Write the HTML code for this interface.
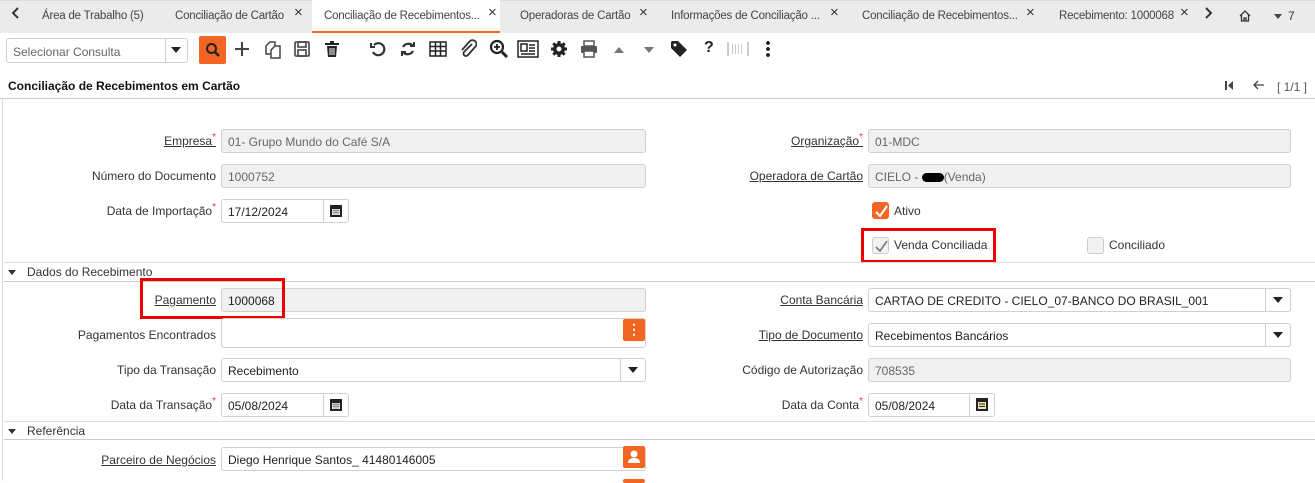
<!DOCTYPE html>
<html><head><meta charset="utf-8">
<style>
*{box-sizing:border-box;margin:0;padding:0}
body{width:1315px;height:481px;overflow:hidden;background:#fff;font-family:"Liberation Sans",sans-serif;font-size:12px;color:#333;position:relative}
.a{position:absolute;white-space:nowrap}
.tabs{left:0;top:0;width:1315px;height:33px;background:#ebebeb;border-top:1px solid #ddd}
.tab{top:8px;font-size:11.5px;line-height:16px;height:18px;letter-spacing:-0.2px;color:#444;overflow:hidden}
.x{font-size:15px;color:#333;top:4px}
.lbl{text-align:right;font-size:12px;color:#333}
.u{text-decoration:underline}
.req::after{content:"*";color:#e33;font-size:10px;position:relative;top:-5px}
.in{height:24px;border:1px solid #d0d0d0;border-radius:3px;background:#fff;padding:5px 6px;font-size:12px;color:#222}
.ro{background:#f0f0f0;color:#666}
.cal{width:25px;height:22px;border-left:1px solid #d0d0d0;right:0;top:0}
.dd{width:25px;height:22px;border-left:1px solid #d0d0d0;right:0;top:0;text-align:center}
.dd::after{content:"";position:absolute;left:7px;top:8px;border-left:5px solid transparent;border-right:5px solid transparent;border-top:6px solid #222}
.hr{height:1px;background:#ddd;left:4px;width:1311px}
.cb{width:17px;height:17px;border:1px solid #ccc;border-radius:3px;background:#f2f2f2}
.ob{background:#f26522;width:22px;height:22px;border-radius:2px}
.tri{border-left:4px solid transparent;border-right:4px solid transparent;border-top:5px solid #333}
</style></head><body>
<div class="a tabs"></div>
<svg class="a" style="left:10px;top:6px" width="10" height="14"><path d="M8 2L3 7l5 5" fill="none" stroke="#333" stroke-width="2"/></svg>
<div class="a tab" style="left:42px">Área de Trabalho (5)</div>
<div class="a tab" style="left:175px;width:116px">Conciliação de Cartão</div><div class="a x" style="left:294px">×</div>
<div class="a" style="left:312px;top:0;width:188px;height:33px;background:#fff;border-bottom:2px solid #f26522"></div>
<div class="a tab" style="left:324px;width:160px">Conciliação de Recebimentos...</div><div class="a x" style="left:488px">×</div>
<div class="a tab" style="left:520px;width:116px">Operadoras de Cartão</div><div class="a x" style="left:639px">×</div>
<div class="a tab" style="left:671px;width:156px">Informações de Conciliação ...</div><div class="a x" style="left:830px">×</div>
<div class="a tab" style="left:862px;width:162px">Conciliação de Recebimentos...</div><div class="a x" style="left:1026px">×</div>
<div class="a tab" style="left:1059px;width:118px">Recebimento: 1000068</div><div class="a x" style="left:1180px">×</div>
<svg class="a" style="left:1204px;top:6px" width="10" height="14"><path d="M2 2l5 5-5 5" fill="none" stroke="#333" stroke-width="2"/></svg>
<svg class="a" style="left:1239px;top:10px" width="12" height="12" fill="none" stroke="#333" stroke-width="1.3"><path d="M1 6L6 1l5 5M2.5 5v6h7V5M5 11V8h2v3"/></svg>
<div class="a tri" style="left:1274px;top:14px;border-top-color:#444"></div>
<div class="a" style="left:1288px;top:9px;font-size:12px;color:#333">7</div>

<!-- toolbar -->
<div class="a in" style="left:6px;top:38px;width:182px;height:25px;color:#666;padding:6px 6px">Selecionar Consulta</div>
<div class="a" style="left:165px;top:39px;width:1px;height:23px;background:#d0d0d0"></div>
<div class="a" style="left:171px;top:47px;border-left:5px solid transparent;border-right:5px solid transparent;border-top:6px solid #222"></div>
<div class="a" style="left:199px;top:36px;width:27px;height:28px;background:#f26522;border-radius:2px"></div>
<svg class="a" style="left:204px;top:41px" width="18" height="18"><circle cx="7.5" cy="7.5" r="4.5" fill="none" stroke="#222" stroke-width="2"/><path d="M11 11l4 4" stroke="#222" stroke-width="2.5"/></svg>
<svg class="a" style="left:234px;top:41px" width="16" height="16"><path d="M8 1v14M1 8h14" stroke="#444" stroke-width="2"/></svg>
<svg class="a" style="left:263px;top:40px" width="20" height="20" fill="none" stroke="#444" stroke-width="1.5"><path d="M3 14V6l4-4h5v12z"/><path d="M8 18V10l4-4h5v12z" fill="#fff"/></svg>
<svg class="a" style="left:293px;top:40px" width="18" height="18" fill="none" stroke="#444" stroke-width="1.6"><rect x="2" y="2" width="14" height="14" rx="1"/><rect x="5" y="2" width="8" height="5"/><rect x="5" y="10" width="8" height="6"/></svg>
<svg class="a" style="left:324px;top:40px" width="16" height="18"><rect x="1" y="3" width="14" height="2" fill="#222"/><rect x="6" y="1" width="4" height="2" fill="#222"/><path d="M3 6h10l-1 11H4z" fill="#222"/><path d="M6 8v7M8 8v7M10 8v7" stroke="#fff"/></svg>
<svg class="a" style="left:369px;top:40px" width="18" height="18" fill="none" stroke="#333" stroke-width="2.2"><path d="M5 5a6 6 0 1 1-1 7"/><path d="M2 3v4h4" stroke-width="2"/></svg>
<svg class="a" style="left:399px;top:40px" width="18" height="18" fill="none" stroke="#333" stroke-width="2.2"><path d="M14 6a6 6 0 0 0-10 1M4 12a6 6 0 0 0 10-1"/><path d="M15 2v4h-4M3 16v-4h4" stroke-width="2"/></svg>
<svg class="a" style="left:429px;top:41px" width="18" height="16" fill="none" stroke="#222" stroke-width="1.5"><rect x="1" y="1" width="16" height="14"/><path d="M1 5.5h16M1 10h16M6.5 1v14M11.5 1v14"/></svg>
<svg class="a" style="left:459px;top:39px" width="18" height="20" fill="none" stroke="#333" stroke-width="1.8"><path d="M13 5L5 13a2.5 2.5 0 0 0 4 3l8-9a4 4 0 0 0-6-5L3 11"/></svg>
<svg class="a" style="left:489px;top:39px" width="20" height="20"><circle cx="8" cy="8" r="6" fill="none" stroke="#222" stroke-width="2.2"/><path d="M13 13l5 5" stroke="#222" stroke-width="3"/><path d="M5 8h6M8 5v6" stroke="#222" stroke-width="1.8"/></svg>
<svg class="a" style="left:517px;top:40px" width="22" height="18" fill="none" stroke="#222" stroke-width="1.5"><rect x="1" y="1" width="20" height="16"/><rect x="4" y="4" width="6" height="7"/><path d="M12 5h6M12 8h6M12 11h6M4 14h14"/></svg>
<svg class="a" style="left:550px;top:40px" width="18" height="18"><circle cx="9" cy="9" r="6" fill="#222"/><path d="M9 1v16M1 9h16M3.3 3.3l11.4 11.4M14.7 3.3L3.3 14.7" stroke="#222" stroke-width="3"/><circle cx="9" cy="9" r="2.5" fill="#fff"/></svg>
<svg class="a" style="left:580px;top:40px" width="18" height="18"><rect x="4" y="1" width="10" height="5" fill="none" stroke="#555" stroke-width="1.5"/><rect x="1" y="6" width="16" height="7" rx="1" fill="#555"/><rect x="4" y="11" width="10" height="6" fill="#fff" stroke="#555" stroke-width="1.5"/></svg>
<div class="a" style="left:614px;top:47px;border-left:5px solid transparent;border-right:5px solid transparent;border-bottom:6px solid #777"></div>
<div class="a" style="left:644px;top:47px;border-left:5px solid transparent;border-right:5px solid transparent;border-top:6px solid #777"></div>
<svg class="a" style="left:670px;top:40px" width="18" height="18"><path d="M1 2v6l9 9 7-7-9-9H2z" fill="#222"/><circle cx="5" cy="5" r="1.5" fill="#fff"/></svg>
<div class="a" style="left:704px;top:39px;font-size:16px;font-weight:bold;color:#222">?</div>
<div class="a" style="left:727px;top:42px;width:22px;height:14px;border-left:2px solid #ccc;border-right:2px solid #ccc;background:repeating-linear-gradient(90deg,#ccc 0 1px,transparent 1px 3px);background-clip:content-box;padding:2px 3px"></div>
<div class="a" style="left:766px;top:40px;width:4px;height:18px;background:radial-gradient(circle,#222 1.8px,transparent 2px) 0 0/4px 6px"></div>

<div class="a" style="left:8px;top:79px;font-weight:bold;font-size:12px;color:#111">Conciliação de Recebimentos em Cartão</div>
<svg class="a" style="left:1225px;top:81px" width="8" height="9"><rect x="0" y="0" width="2" height="9" fill="#444"/><path d="M8 0v9L3 4.5z" fill="#444"/></svg>
<svg class="a" style="left:1253px;top:80px" width="12" height="10" fill="none" stroke="#444" stroke-width="1.3"><path d="M11 5H2M5 1L1 5l4 4"/></svg>
<div class="a" style="left:1277px;top:80px;font-size:12px;color:#555">[ 1/1 ]</div>
<div class="a" style="left:0;top:98px;width:1315px;height:1px;background:#ccc"></div>
<div class="a" style="left:2px;top:99px;width:1px;height:382px;background:#ddd"></div>

<!-- left column -->
<div class="a lbl u req" style="right:1099px;top:134px">Empresa</div>
<div class="a in ro" style="left:221px;top:129px;width:425px">01- Grupo Mundo do Café S/A</div>
<div class="a lbl" style="right:1099px;top:169px">Número do Documento</div>
<div class="a in ro" style="left:221px;top:164px;width:425px">1000752</div>
<div class="a lbl req" style="right:1099px;top:204px">Data de Importação</div>
<div class="a in" style="left:221px;top:199px;width:128px">17/12/2024<div class="a cal"><svg style="margin:3px 0 0 5px" width="14" height="15"><rect x="1" y="2" width="12" height="12" fill="#222"/><rect x="3" y="6" width="8" height="6" fill="#fff"/><path d="M3 7.5h8M3 9.5h8M5 6v6M7 6v6M9 6v6" stroke="#555" stroke-width=".6"/></svg></div></div>

<!-- right col top -->
<div class="a lbl u req" style="right:452px;top:134px">Organização</div>
<div class="a in ro" style="left:868px;top:129px;width:423px">01-MDC</div>
<div class="a lbl u" style="right:452px;top:169px">Operadora de Cartão</div>
<div class="a in ro" style="left:868px;top:164px;width:423px">CIELO - <span style="display:inline-block;width:22px;height:9px;background:#000;border-radius:5px;vertical-align:-1px"></span>(Venda)</div>
<div class="a cb" style="left:872px;top:202px;background:#f26522;border-color:#f26522"></div>
<svg class="a" style="left:873px;top:203px" width="16" height="16"><path d="M3 9l4 4 7-10" fill="none" stroke="#fff" stroke-width="2"/></svg>
<div class="a" style="left:894px;top:204px">Ativo</div>
<div class="a cb" style="left:872px;top:237px"></div>
<svg class="a" style="left:873px;top:238px" width="16" height="16"><path d="M3 9l4 4 7-10" fill="none" stroke="#777" stroke-width="1.6"/></svg>
<div class="a" style="left:894px;top:238px">Venda Conciliada</div>
<div class="a" style="left:861px;top:228px;width:135px;height:35px;border:3px solid #e00"></div>
<div class="a cb" style="left:1087px;top:237px"></div>
<div class="a" style="left:1109px;top:238px">Conciliado</div>

<div class="a hr" style="top:262px"></div>
<div class="a tri" style="left:8px;top:270px"></div>
<div class="a" style="left:27px;top:265px">Dados do Recebimento</div>
<div class="a hr" style="top:281px;background:#ccc"></div>

<div class="a lbl u" style="right:1099px;top:293px">Pagamento</div>
<div class="a in ro" style="left:221px;top:288px;width:425px;color:#222">1000068</div>
<div class="a" style="left:140px;top:278px;width:145px;height:41px;border:3px solid #e00"></div>
<div class="a lbl" style="right:1099px;top:328px">Pagamentos Encontrados</div>
<div class="a in" style="left:221px;top:318px;width:425px;height:30px"></div>
<div class="a ob" style="left:623px;top:319px;color:#fff;text-align:center;font-weight:bold;font-size:14px;line-height:20px">&#8942;</div>
<div class="a lbl" style="right:1099px;top:363px">Tipo da Transação</div>
<div class="a in" style="left:221px;top:358px;width:425px">Recebimento<div class="a dd"></div></div>
<div class="a lbl req" style="right:1099px;top:398px">Data da Transação</div>
<div class="a in" style="left:221px;top:393px;width:128px">05/08/2024<div class="a cal"><svg style="margin:3px 0 0 5px" width="14" height="15"><rect x="1" y="2" width="12" height="12" fill="#222"/><rect x="3" y="6" width="8" height="6" fill="#fff"/><path d="M3 7.5h8M3 9.5h8M5 6v6M7 6v6M9 6v6" stroke="#555" stroke-width=".6"/></svg></div></div>

<div class="a lbl u" style="right:452px;top:293px">Conta Bancária</div>
<div class="a in" style="left:868px;top:288px;width:423px">CARTAO DE CREDITO - CIELO_07-BANCO DO BRASIL_001<div class="a dd"></div></div>
<div class="a lbl u" style="right:452px;top:328px">Tipo de Documento</div>
<div class="a in" style="left:868px;top:323px;width:423px">Recebimentos Bancários<div class="a dd"></div></div>
<div class="a lbl" style="right:452px;top:363px">Código de Autorização</div>
<div class="a in ro" style="left:868px;top:358px;width:423px">708535</div>
<div class="a lbl req" style="right:452px;top:398px">Data da Conta</div>
<div class="a in" style="left:868px;top:393px;width:127px">05/08/2024<div class="a cal"><svg style="margin:3px 0 0 5px" width="14" height="15"><rect x="1" y="1" width="12" height="13" fill="#222"/><rect x="3" y="5" width="8" height="7" fill="#f5e6b0"/><path d="M4 7h6M4 9.5h6" stroke="#222" stroke-width="1"/></svg></div></div>

<div class="a hr" style="top:421px"></div>
<div class="a tri" style="left:8px;top:429px"></div>
<div class="a" style="left:27px;top:424px">Referência</div>
<div class="a hr" style="top:439px;background:#ccc"></div>

<div class="a lbl u" style="right:1099px;top:453px">Parceiro de Negócios</div>
<div class="a in" style="left:221px;top:447px;width:425px;height:24px">Diego Henrique Santos_ 41480146005</div>
<div class="a ob" style="left:623px;top:446px"><svg width="22" height="22"><circle cx="11" cy="8" r="3.5" fill="#fff"/><path d="M5 17c0-4 3-5 6-5s6 1 6 5z" fill="#fff"/></svg></div>
<div class="a ob" style="left:623px;top:479px;height:4px"></div>
</body></html>
